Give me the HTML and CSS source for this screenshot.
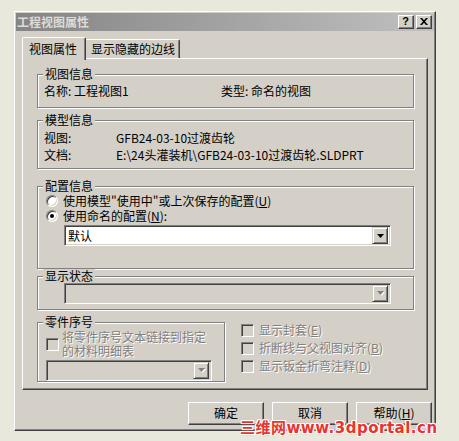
FILE: index.html
```html
<!DOCTYPE html>
<html lang="zh-CN">
<head>
<meta charset="utf-8">
<title>工程视图属性</title>
<link rel="stylesheet" href="styles.css">
</head>
<body>
<div class="dialog">
  <div class="titlebar">
    <span class="title">工程视图属性</span>
    <div class="tbtns">
      <span class="tbtn">?</span>
      <span class="tbtn">
        <svg width="8" height="7" viewBox="0 0 8 7"><path d="M0 0h2l2 2.3 2-2.3h2L5 3.5 8 7H6L4 4.7 2 7H0l3-3.5z" fill="#000"/></svg>
      </span>
    </div>
  </div>
  <div class="body">
    <div class="tabs">
      <div class="tab active">视图属性</div>
      <div class="tab">显示隐藏的边线</div>
    </div>
    <div class="panel">
      <div class="group g1">
        <div class="legend">视图信息</div>
        <div class="row2">
          <span class="c1">名称: 工程视图1</span>
          <span class="c2">类型: 命名的视图</span>
        </div>
      </div>
      <div class="group g2">
        <div class="legend">模型信息</div>
        <div class="kv">
          <span>视图:</span><span>GFB24-03-10过渡齿轮</span>
          <span>文档:</span><span>E:\24头灌装机\GFB24-03-10过渡齿轮.SLDPRT</span>
        </div>
      </div>
      <div class="group g3">
        <div class="legend">配置信息</div>
        <div class="opt"><span class="radio"></span><span>使用模型"使用中"或上次保存的配置(<u>U</u>)</span></div>
        <div class="opt"><span class="radio on"></span><span>使用命名的配置(<u>N</u>):</span></div>
        <div class="combo wide">
          <span class="ctext">默认</span>
          <span class="arrow"><svg width="7" height="4" viewBox="0 0 7 4"><path d="M0 0h7L3.5 4z" fill="#000"/></svg></span>
        </div>
      </div>
      <div class="group g4">
        <div class="legend">显示状态</div>
        <div class="combo wide disabled">
          <span class="ctext"></span>
          <span class="arrow"><svg width="8" height="5" viewBox="0 0 8 5"><path d="M1 1h7L4.5 5z" fill="#fff"/><path d="M0 0h7L3.5 4z" fill="#808080"/></svg></span>
        </div>
      </div>
      <div class="bottomrow">
        <div class="group g5">
          <div class="legend">零件序号</div>
          <div class="chkrow">
            <span class="check"></span>
            <span class="dis two">将零件序号文本链接到指定<br>的材料明细表</span>
          </div>
          <div class="combo small disabled">
            <span class="ctext"></span>
            <span class="arrow"><svg width="8" height="5" viewBox="0 0 8 5"><path d="M1 1h7L4.5 5z" fill="#fff"/><path d="M0 0h7L3.5 4z" fill="#808080"/></svg></span>
          </div>
        </div>
        <div class="checks">
          <div class="chk"><span class="check"></span><span class="dis">显示封套(<u>E</u>)</span></div>
          <div class="chk"><span class="check"></span><span class="dis">折断线与父视图对齐(<u>B</u>)</span></div>
          <div class="chk"><span class="check"></span><span class="dis">显示钣金折弯注释(<u>D</u>)</span></div>
        </div>
      </div>
    </div>
    <div class="buttons">
      <div class="btn">确定</div>
      <div class="btn">取消</div>
      <div class="btn">帮助(<u>H</u>)</div>
    </div>
  </div>
  <div class="watermark">三维网www.3dportal.cn</div>
</div>
</body>
</html>
```
FILE: styles.css
```css
* { box-sizing: border-box; }
html, body { margin: 0; padding: 0; }
body {
  background: #e9e8dd;
  font-family: "Noto Sans CJK SC", "Liberation Sans", sans-serif;
  font-size: 12px;
  line-height: 14px;
  color: #000;
  width: 459px;
  height: 441px;
  overflow: hidden;
}
u { text-decoration: underline; text-underline-offset: 1px; }

.dialog {
  position: relative;
  margin: 11px 0 0 14px;
  width: 422px;
  height: 420px;
  background: #d4d0c8;
  border: 1px solid;
  border-color: #ffffff #404040 #404040 #ffffff;
  box-shadow: inset -1px -1px 0 #808080;
  padding: 1px;
}

.titlebar {
  height: 18px;
  background: linear-gradient(to right, #858585, #c0c0c0);
  display: flex;
  align-items: center;
  justify-content: space-between;
  padding: 0 2px 0 1px;
}
.title {
  color: #dedcd6;
  font-weight: 700;
  font-size: 12px;
  line-height: 14px;
}
.tbtns { display: flex; gap: 2px; }
.tbtn {
  width: 16px;
  height: 14px;
  background: #d4d0c8;
  border: 1px solid;
  border-color: #ffffff #404040 #404040 #ffffff;
  box-shadow: inset -1px -1px 0 #808080;
  display: flex;
  align-items: center;
  justify-content: center;
  font-family: "Liberation Sans", sans-serif;
  font-weight: 700;
  font-size: 11px;
  line-height: 11px;
  padding: 0 1px 1px 0;
}

.body { padding: 0 6px; }

.tabs {
  display: flex;
  align-items: flex-end;
  height: 27px;
}
.tab {
  height: 19px;
  border: 1px solid;
  border-bottom: none;
  border-color: #ffffff #404040 transparent #ffffff;
  box-shadow: inset -1px 0 0 #808080;
  border-radius: 2px 2px 0 0;
  line-height: 17px;
  white-space: nowrap;
}
.tab.active {
  position: relative;
  z-index: 1;
  height: 23px;
  margin-bottom: -2px;
  width: 64px;
  padding: 0 0 0 6px;
  line-height: 22px;
  background: #d4d0c8;
}
.tab:not(.active) {
  width: 95px;
  margin-left: -1px;
  padding-left: 5px;
}

.panel {
  height: 332px;
  width: 406px;
  border: 1px solid;
  border-color: #ffffff #404040 #404040 #ffffff;
  box-shadow: inset -1px -1px 0 #808080;
  padding: 0 0 0 14px;
  display: flex;
  flex-direction: column;
}

.group {
  width: 377px;
  border: 1px solid #808080;
  box-shadow: inset 1px 1px 0 #ffffff, 1px 1px 0 #ffffff;
  flex: none;
}
.legend {
  width: fit-content;
  height: 14px;
  margin: -8px 0 0 5px;
  padding: 0 2px;
  background: #d4d0c8;
  line-height: 14px;
}

.g1 { height: 34px; margin-top: 15px; }
.row2 { display: flex; margin-top: 3px; padding-left: 6px; }
.c1 { width: 177px; }

.g2 { height: 49px; margin-top: 12px; }
.kv {
  display: grid;
  grid-template-columns: 72px auto;
  grid-auto-rows: 17px;
  line-height: 17px;
  margin-top: 2px;
  padding-left: 6px;
}

.g3 { height: 83px; margin-top: 17px; }
.opt {
  display: flex;
  align-items: center;
  height: 15px;
  padding-left: 8px;
}
.opt:first-of-type { margin-top: 2px; }
.radio {
  width: 12px;
  height: 12px;
  border-radius: 50%;
  background: #fff;
  border: 1px solid;
  border-color: #808080 #ffffff #ffffff #808080;
  box-shadow: inset 1px 1px 0 #404040, inset -1px -1px 0 #d4d0c8;
  margin-right: 5px;
  flex: none;
  display: flex;
  align-items: center;
  justify-content: center;
}
.radio.on::after {
  content: "";
  width: 4px;
  height: 4px;
  border-radius: 50%;
  background: #000;
}

.combo {
  height: 21px;
  background: #fff;
  border: 1px solid;
  border-color: #808080 #ffffff #ffffff #808080;
  box-shadow: inset 1px 1px 0 #404040, inset -1px -1px 0 #d4d0c8;
  display: flex;
  align-items: center;
  justify-content: space-between;
  padding: 1px 2px;
}
.combo.wide { width: 327px; margin-left: 26px; }
.g3 .combo { margin-top: 2px; }
.combo.disabled { background: #d4d0c8; }
.ctext { padding-left: 1px; line-height: 17px; }
.arrow {
  width: 16px;
  height: 17px;
  background: #d4d0c8;
  border: 1px solid;
  border-color: #d4d0c8 #404040 #404040 #d4d0c8;
  box-shadow: inset 1px 1px 0 #ffffff, inset -1px -1px 0 #808080;
  display: flex;
  align-items: center;
  justify-content: center;
  padding-left: 1px;
}

.g4 { height: 34px; margin-top: 7px; }

.bottomrow { display: flex; margin-top: 12px; }
.g5 { width: 188px; height: 60px; }
.chkrow {
  display: flex;
  align-items: center;
  margin-top: 1px;
  padding-left: 8px;
}
.check {
  width: 13px;
  height: 13px;
  flex: none;
  background: #d4d0c8;
  border: 1px solid;
  border-color: #808080 #ffffff #ffffff #808080;
  box-shadow: inset 1px 1px 0 #404040, inset -1px -1px 0 #d4d0c8;
}
.dis {
  color: #808080;
  text-shadow: 1px 1px 0 #ffffff;
  white-space: nowrap;
}
.two { line-height: 14px; margin-left: 3px; }
.combo.small { width: 166px; margin: 2px 0 0 8px; }

.checks {
  margin: -1px 0 0 16px;
  display: flex;
  flex-direction: column;
}
.chk {
  display: flex;
  align-items: center;
  height: 18px;
}
.chk .check { margin-right: 5px; }

.buttons {
  display: flex;
  justify-content: flex-end;
  gap: 8px;
  margin: 12px -4px 0 0;
}
.btn {
  width: 76px;
  height: 23px;
  border: 1px solid;
  border-color: #ffffff #404040 #404040 #ffffff;
  box-shadow: inset -1px -1px 0 #808080;
  display: flex;
  align-items: center;
  justify-content: center;
  line-height: 14px;
  padding-bottom: 1px;
}

.watermark {
  position: absolute;
  left: 225px;
  top: 409px;
  font-family: "DejaVu Sans", "Noto Sans CJK SC", sans-serif;
  font-weight: 700;
  font-size: 15px;
  line-height: 14px;
  color: #e8342e;
  letter-spacing: 0.5px;
  white-space: nowrap;
  text-shadow:
    -1px -1px 0 #fff, 1px -1px 0 #fff, -1px 1px 0 #fff, 1px 1px 0 #fff,
    0 -1px 0 #fff, 0 1px 0 #fff, -1px 0 0 #fff, 1px 0 0 #fff,
    0 0 2px #e88, 0 0 3px #f4b0b0;
}
```
